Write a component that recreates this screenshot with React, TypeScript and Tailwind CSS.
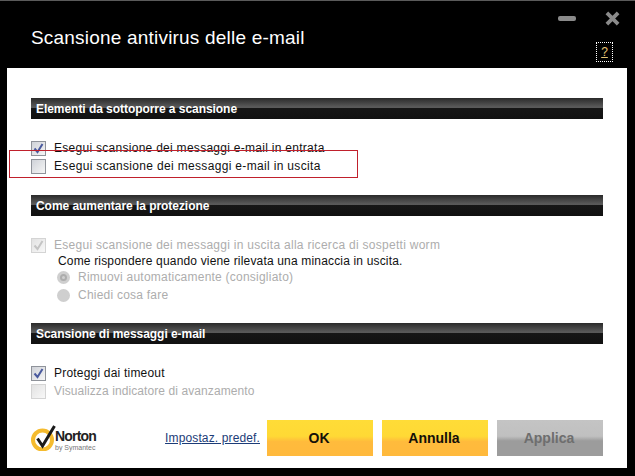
import type { ReactNode } from "react";

const FONT = "font-['Liberation_Sans',Arial,sans-serif]";

const SectionBar = ({ title }: { title: string }) => (
  <div className="flex h-[21px] items-center bg-[linear-gradient(to_bottom,#2a2a2a_0%,#5c5c5c_45%,#161616_50%,#111111_100%)] pl-[5px]">
    <h2 className="text-[12px] leading-none font-bold tracking-[-0.05px] text-white">{title}</h2>
  </div>
);

const Checkbox = ({ checked, disabled }: { checked?: boolean; disabled?: boolean }) => (
  <span
    className={
      "flex h-[15px] w-[15px] shrink-0 items-center justify-center border " +
      (disabled
        ? "border-[#d4d4d4] bg-[linear-gradient(135deg,#e2e2e2,#f8f8f8)]"
        : "border-[#8f939a] bg-[linear-gradient(135deg,#cfd2d8,#f6f6f6)]")
    }
  >
    {checked && (
      <svg viewBox="0 0 13 13" className="h-[13px] w-[13px]">
        <path
          d="M2.5 6.5 L5.5 10 L10.5 2"
          fill="none"
          stroke={disabled ? "#c4c4c4" : "#4a5a9e"}
          strokeWidth="2"
        />
      </svg>
    )}
  </span>
);

const CheckRow = ({
  label,
  checked,
  disabled,
  spacing = "tracking-[0.28px]",
}: {
  label: string;
  checked?: boolean;
  disabled?: boolean;
  spacing?: string;
}) => (
  <div className="flex h-[18px] items-center gap-2">
    <Checkbox checked={checked} disabled={disabled} />
    <span className={"text-[12px] whitespace-nowrap " + spacing + " " + (disabled ? "text-[#adadad]" : "text-[#111111]")}>
      {label}
    </span>
  </div>
);

const Radio = ({ label, selected }: { label: string; selected?: boolean }) => (
  <div className="flex h-[18px] items-center gap-[8px] pl-[26px]">
    <span className="flex h-[13px] w-[13px] items-center justify-center rounded-full bg-[#cfcfcf]">
      {selected && <span className="h-[7px] w-[7px] rounded-full border-2 border-[#adadad]" />}
    </span>
    <span className="text-[12px] tracking-[0.23px] whitespace-nowrap text-[#adadad]">{label}</span>
  </div>
);

const ActionButton = ({ children, disabled }: { children: ReactNode; disabled?: boolean }) => (
  <button
    className={
      "h-9 w-[106px] pr-[2px] text-[14px] font-bold " +
      (disabled
        ? "bg-[linear-gradient(to_bottom,#c4c4c4_0%,#c0c0c0_45%,#9c9c9c_58%,#9c9c9c_100%)] text-[#6e6e6e]"
        : "bg-[linear-gradient(to_bottom,#ffdc37_0%,#ffd935_45%,#ffbb3c_60%,#ffb93c_100%)] text-[#141008]")
    }
  >
    {children}
  </button>
);

const NortonLogo = () => (
  <div className="flex h-[26px] items-start">
    <svg viewBox="0 0 25 26" className="h-[26px] w-[25px] shrink-0">
      <circle cx="11.5" cy="15" r="9.5" fill="none" stroke="#f5bb2e" strokeWidth="4" />
      <path d="M6.5 13.5 L11.5 21 L23.5 1" fill="none" stroke="#1a1a1a" strokeWidth="3" />
    </svg>
    <div className="-ml-px flex flex-col pt-[5px]">
      <span className="text-[14px] leading-[12px] font-bold tracking-[-0.8px] text-[#222222]">Norton</span>
      <span className="pt-[2px] text-[7px] leading-[8px] text-[#777777]">by Symantec</span>
    </div>
  </div>
);

export default function App() {
  return (
    <div className={"relative h-[476px] w-[635px] overflow-hidden border-t border-[#5a5a5a] bg-black " + FONT}>
      <header className="flex h-[67px] items-start justify-between pr-[15px] pl-[31px]">
        <h1 className="pt-[25px] text-[19px] leading-6 tracking-[0.2px] text-white">Scansione antivirus delle e-mail</h1>
        <div className="flex flex-col items-end">
          <div className="flex items-center gap-[29px] pt-[10px]">
            <span className="h-[5px] w-[18px] rounded-[2px] bg-[#8a8a8a]" />
            <svg viewBox="0 0 16 16" className="h-[15px] w-[15px]">
              <path d="M2 2 L14 14 M14 2 L2 14" stroke="#8a8a8a" strokeWidth="4" />
            </svg>
          </div>
          <span className="mt-[16px] mr-[7px] flex h-5 w-[17px] items-center justify-center border border-dotted border-white text-[12px] leading-none text-[#e6c676] underline">
            ?
          </span>
        </div>
      </header>

      <main className="mr-[8px] ml-[7px] flex h-[400px] flex-col bg-white px-6 pt-[30px]">
        <SectionBar title="Elementi da sottoporre a scansione" />
        <div className="mt-[20px] flex flex-col">
          <CheckRow label="Esegui scansione dei messaggi e-mail in entrata" checked />
          <CheckRow label="Esegui scansione dei messaggi e-mail in uscita" spacing="tracking-[0.33px]" />
        </div>

        <div className="mt-[20px]">
          <SectionBar title="Come aumentare la protezione" />
        </div>
        <div className="mt-[20px] flex flex-col">
          <CheckRow label="Esegui scansione dei messaggi in uscita alla ricerca di sospetti worm" checked disabled />
          <p className="-mt-px h-[15px] pl-[27px] text-[12px] leading-[16px] tracking-[0.17px] text-[#111111]">
            Come rispondere quando viene rilevata una minaccia in uscita.
          </p>
          <Radio label="Rimuovi automaticamente (consigliato)" selected />
          <Radio label="Chiedi cosa fare" />
        </div>

        <div className="mt-[19px]">
          <SectionBar title="Scansione di messaggi e-mail" />
        </div>
        <div className="mt-[20px] flex flex-col">
          <CheckRow label="Proteggi dai timeout" checked spacing="tracking-[0.2px]" />
          <CheckRow label="Visualizza indicatore di avanzamento" disabled spacing="tracking-[0.09px]" />
        </div>

        <footer className="mt-[20px] flex items-center justify-between">
          <NortonLogo />
          <div className="flex items-center gap-[9px]">
            <a className="mr-[-2px] text-[12px] tracking-[0.13px] text-[#1c3c78] underline">Impostaz. predef.</a>
            <ActionButton>OK</ActionButton>
            <ActionButton>Annulla</ActionButton>
            <ActionButton disabled>Applica</ActionButton>
          </div>
        </footer>
      </main>

      {/* red annotation round the second checkbox */}
      <div className="absolute top-[149px] left-[9px] h-[28px] w-[349px] border border-[#c0202c]" />
    </div>
  );
}
